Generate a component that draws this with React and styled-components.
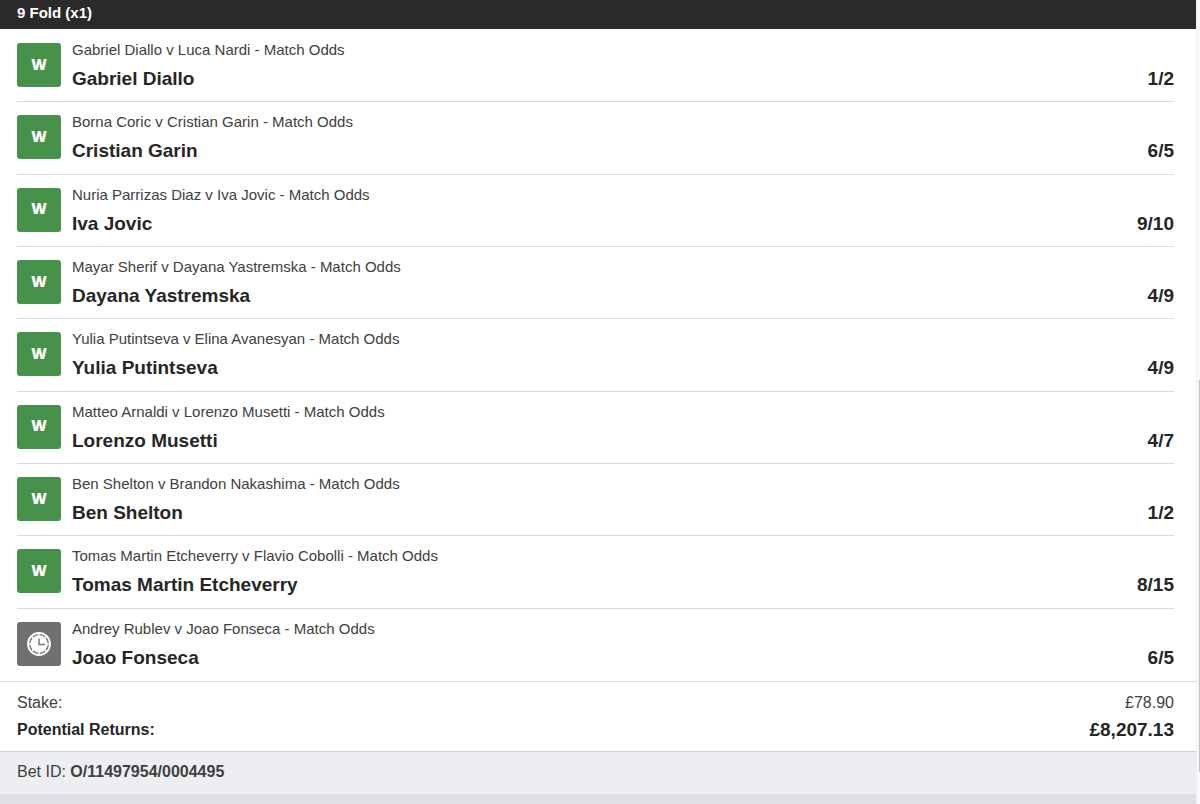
import React from 'react';
import styled, {createGlobalStyle} from 'styled-components';

const LEGS = [
  {event: 'Gabriel Diallo v Luca Nardi', pick: 'Gabriel Diallo', odds: '1/2', won: true},
  {event: 'Borna Coric v Cristian Garin', pick: 'Cristian Garin', odds: '6/5', won: true},
  {event: 'Nuria Parrizas Diaz v Iva Jovic', pick: 'Iva Jovic', odds: '9/10', won: true},
  {event: 'Mayar Sherif v Dayana Yastremska', pick: 'Dayana Yastremska', odds: '4/9', won: true},
  {event: 'Yulia Putintseva v Elina Avanesyan', pick: 'Yulia Putintseva', odds: '4/9', won: true},
  {event: 'Matteo Arnaldi v Lorenzo Musetti', pick: 'Lorenzo Musetti', odds: '4/7', won: true},
  {event: 'Ben Shelton v Brandon Nakashima', pick: 'Ben Shelton', odds: '1/2', won: true},
  {event: 'Tomas Martin Etcheverry v Flavio Cobolli', pick: 'Tomas Martin Etcheverry', odds: '8/15', won: true},
  {event: 'Andrey Rublev v Joao Fonseca', pick: 'Joao Fonseca', odds: '6/5', won: false},
];

const ClockIcon = () => (
  <svg width="24" height="24" viewBox="0 0 24 24" fill="none" role="img" aria-label="Pending">
    <circle cx="12" cy="12" r="11.9" fill="#fff" />
    <circle
      cx="12"
      cy="12"
      r="9.3"
      stroke="#707070"
      strokeWidth="1.3"
      pathLength="80"
      strokeDasharray="8 2"
      strokeDashoffset="-1"
    />
    <path d="M12 6.5v6h6" stroke="#707070" strokeWidth="1.4" />
  </svg>
);

const Leg = ({leg}) => (
  <LegRow>
    <Status $won={leg.won}>{leg.won ? 'W' : <ClockIcon />}</Status>
    <LegText>
      <EventName>{leg.event} - Match Odds</EventName>
      <Selection>
        <span>{leg.pick}</span>
        <span>{leg.odds}</span>
      </Selection>
    </LegText>
  </LegRow>
);

const App = () => (
  <Page>
    <GlobalStyle />
    <Slip>
      <Header>9 Fold (x1)</Header>
      <LegList>
        {LEGS.map(leg => (
          <Leg key={leg.event} leg={leg} />
        ))}
      </LegList>
      <Totals>
        <dt>Stake:</dt>
        <dd>£78.90</dd>
        <ReturnsLabel>Potential Returns:</ReturnsLabel>
        <ReturnsValue>£8,207.13</ReturnsValue>
      </Totals>
      <BetId>
        Bet ID: <strong>O/11497954/0004495</strong>
      </BetId>
    </Slip>
    <ScrollTrack>
      <ScrollThumb />
    </ScrollTrack>
  </Page>
);

const GlobalStyle = createGlobalStyle`
  * {
    box-sizing: border-box;
  }

  body {
    margin: 0;
    background: #dee0e5;
    color: #404040;
    font-family: 'Liberation Sans', Arial, sans-serif;
    font-size: 16px;
  }
`;

const Page = styled.div`
  display: flex;
  min-height: 100vh;
`;

const Slip = styled.main`
  flex: 1;
  min-width: 0;
`;

const Header = styled.h1`
  margin: 0;
  padding: 3px 17px 6px;
  background: #2a2a2a;
  color: #fff;
  font-size: 15px;
  line-height: 20px;
`;

// equal rows shared out over the list
const LegList = styled.ul`
  display: grid;
  grid-auto-rows: 1fr;
  min-height: 652px;
  margin: 0;
  padding: 1px 22px 0 17px;
  list-style: none;
  background: #fff;
`;

const LegRow = styled.li`
  display: flex;
  gap: 11px;
  padding-top: 13px;
  border-bottom: 1px solid #d9dbde;

  &:last-child {
    border-bottom: none;
  }
`;

const Status = styled.div`
  display: flex;
  flex: none;
  align-items: center;
  justify-content: center;
  width: 44px;
  height: 44px;
  padding-bottom: ${props => (props.$won ? '3px' : '0')};
  border-radius: 3px;
  background: ${props => (props.$won ? '#46924b' : '#707070')};
  color: #fff;
  font-family: 'Open Sans', sans-serif;
  font-size: 15px;
  font-weight: 800;
  line-height: 20px;
`;

const LegText = styled.div`
  flex: 1;
  min-width: 0;
`;

const EventName = styled.div`
  font-size: 15px;
  line-height: 14px;
`;

const Selection = styled.div`
  display: flex;
  justify-content: space-between;
  margin-top: 10px;
  color: #262626;
  font-size: 19px;
  font-weight: bold;
  line-height: 24px;
`;

const Totals = styled.dl`
  display: grid;
  grid-template-columns: 1fr auto;
  margin: 0;
  padding: 7px 22px 8px 17px;
  border-top: 1px solid #d9dbde;
  border-bottom: 1px solid #d0d2d5;
  background: #fff;
  line-height: 27px;

  dd {
    margin: 0;
    text-align: right;
  }
`;

const ReturnsLabel = styled.dt`
  color: #262626;
  font-weight: bold;
`;

const ReturnsValue = styled.dd`
  color: #262626;
  font-size: 19px;
  font-weight: bold;
`;

const BetId = styled.div`
  padding: 8px 17px 10px;
  background: #edeef2;
  line-height: 24px;
`;

const ScrollTrack = styled.div`
  width: 4px;
  padding: 380px 0 32px 2px;
  border-left: 1px solid #ececec;
  background: #f9f9f9;
`;

const ScrollThumb = styled.div`
  height: 100%;
  background: #c1c1c1;
`;

export default App;
